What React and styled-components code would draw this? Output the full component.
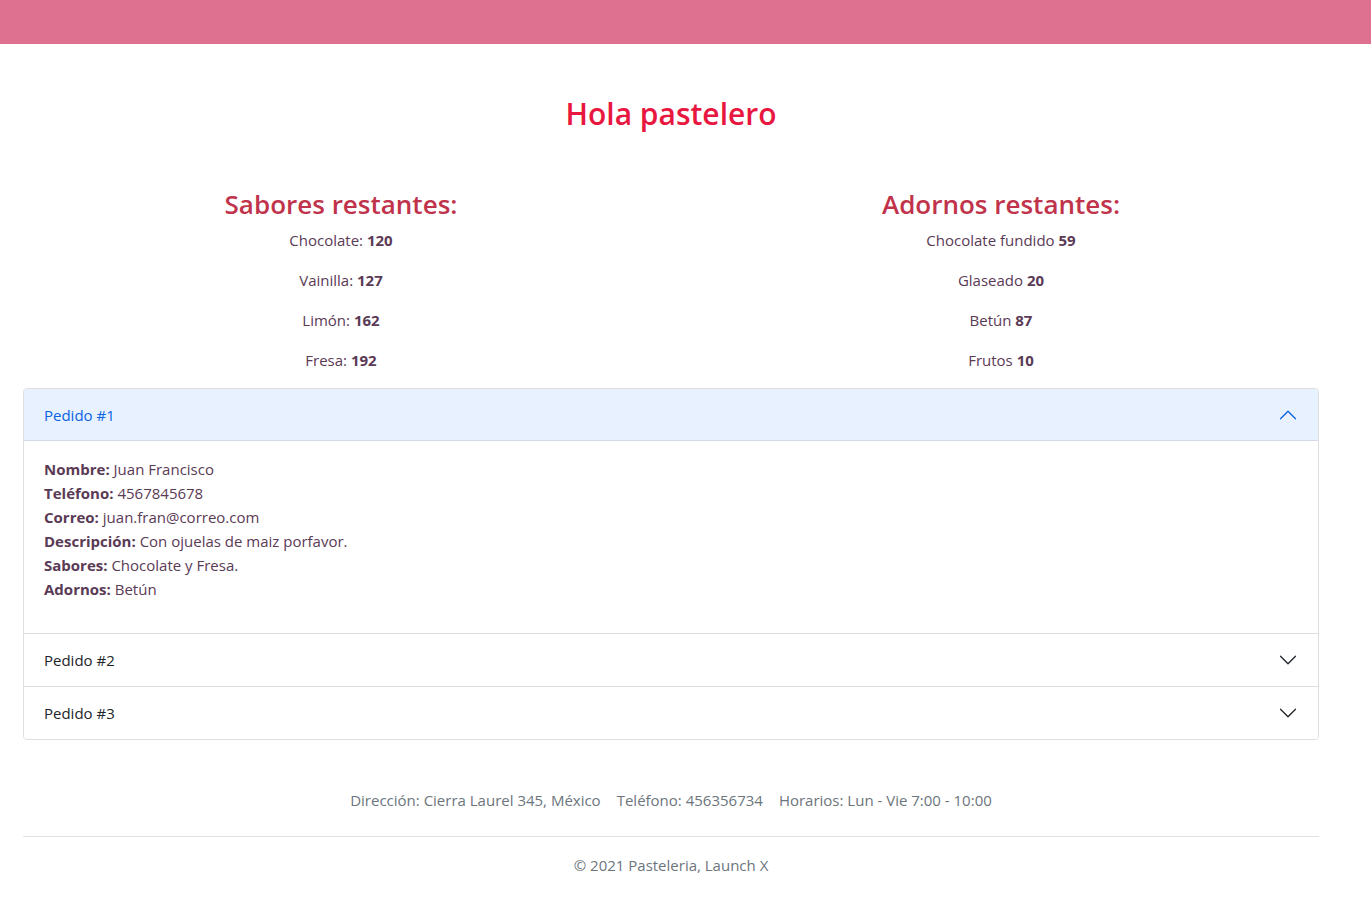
import React, { useState } from 'react'
import styled, { createGlobalStyle } from 'styled-components'

const GlobalStyle = createGlobalStyle`
  * { box-sizing: border-box; }
  body {
    margin: 0;
    background: #fff;
    font-family: "Open Sans", "Noto Sans", sans-serif;
    font-size: 15px;
    line-height: 24px;
    color: #5a3a55;
  }
`

const TopBar = styled.nav`
  height: 44px;
  width: 100%;
  background: #de7090;
`

const Container = styled.main`
  width: 1296px;
  margin-left: 23px;
`

const Title = styled.h2`
  margin: 51px 0 0;
  height: 38px;
  line-height: 38px;
  text-align: center;
  font-size: 30px;
  font-weight: 600;
  color: #e8173f;
`

const StockRow = styled.section`
  display: grid;
  grid-template-columns: 1fr 1fr;
  margin: 54px -12px 0;
`

const StockCol = styled.div`
  text-align: center;
`

const StockTitle = styled.h3`
  margin: 0 0 7px;
  height: 34px;
  line-height: 34px;
  font-size: 26px;
  font-weight: 600;
  color: #c0334b;
`

const StockItem = styled.p`
  margin: 0 0 16px;
  b { font-weight: 700; }
`

const Accordion = styled.div`
  border: 1px solid #dfdfdf;
  border-radius: 4px;
  overflow: hidden;
`

const Item = styled.div`
  & + & { border-top: 1px solid #dfdfdf; }
`

const Header = styled.button`
  display: flex;
  align-items: center;
  justify-content: space-between;
  width: 100%;
  height: 52px;
  padding: 0 20px;
  border: 0;
  font: inherit;
  text-align: left;
  cursor: pointer;
  background: ${({ open }) => (open ? '#e7f1ff' : '#fff')};
  color: ${({ open }) => (open ? '#0c63e4' : '#212529')};
  box-shadow: ${({ open }) => (open ? 'inset 0 -1px 0 #d4dbe6' : 'none')};
  svg {
    transform: ${({ open }) => (open ? 'rotate(-180deg)' : 'none')};
  }
`

const Body = styled.div`
  padding: 16px 20px;
  p { margin: 0 0 16px; }
  b { font-weight: 700; }
`

const Footer = styled.footer`
  margin: 24px 0;
  padding: 16px 0;
`

const FooterNav = styled.ul`
  display: flex;
  justify-content: center;
  list-style: none;
  margin: 0 0 16px;
  padding: 0 0 16px;
  border-bottom: 1px solid #dee2e6;
`

const FooterLink = styled.li`
  padding: 8px 8px;
  color: #6c757d;
`

const Copy = styled.p`
  margin: 0;
  text-align: center;
  color: #6c757d;
`

function Chevron() {
  return (
    <svg width="20" height="20" viewBox="0 0 16 16" fill="currentColor">
      <path fillRule="evenodd" d="M1.646 4.646a.5.5 0 0 1 .708 0L8 10.293l5.646-5.647a.5.5 0 0 1 .708.708l-6 6a.5.5 0 0 1-.708 0l-6-6a.5.5 0 0 1 0-.708z" />
    </svg>
  )
}

const sabores = [['Chocolate:', 120], ['Vainilla:', 127], ['Limón:', 162], ['Fresa:', 192]]
const adornos = [['Chocolate fundido', 59], ['Glaseado', 20], ['Betún', 87], ['Frutos', 10]]

const pedidos = [
  {
    id: 1,
    nombre: 'Juan Francisco',
    telefono: '4567845678',
    correo: 'juan.fran@correo.com',
    descripcion: 'Con ojuelas de maiz porfavor.',
    sabores: 'Chocolate y Fresa.',
    adornos: 'Betún',
  },
  { id: 2 },
  { id: 3 },
]

export default function App() {
  const [open, setOpen] = useState(1)
  return (
    <>
      <GlobalStyle />
      <TopBar />
      <Container>
        <Title>Hola pastelero</Title>
        <StockRow>
          <StockCol>
            <StockTitle>Sabores restantes:</StockTitle>
            {sabores.map(([n, v]) => (
              <StockItem key={n}>{n} <b>{v}</b></StockItem>
            ))}
          </StockCol>
          <StockCol>
            <StockTitle>Adornos restantes:</StockTitle>
            {adornos.map(([n, v]) => (
              <StockItem key={n}>{n} <b>{v}</b></StockItem>
            ))}
          </StockCol>
        </StockRow>
        <Accordion>
          {pedidos.map((p) => (
            <Item key={p.id}>
              <Header open={open === p.id} onClick={() => setOpen(open === p.id ? 0 : p.id)}>
                Pedido #{p.id}
                <Chevron />
              </Header>
              {open === p.id && p.nombre && (
                <Body>
                  <p>
                    <b>Nombre:</b> {p.nombre}<br />
                    <b>Teléfono:</b> {p.telefono}<br />
                    <b>Correo:</b> {p.correo}<br />
                    <b>Descripción:</b> {p.descripcion}<br />
                    <b>Sabores:</b> {p.sabores}<br />
                    <b>Adornos:</b> {p.adornos}
                  </p>
                </Body>
              )}
            </Item>
          ))}
        </Accordion>
        <Footer>
          <FooterNav>
            <FooterLink>Dirección: Cierra Laurel 345, México</FooterLink>
            <FooterLink>Teléfono: 456356734</FooterLink>
            <FooterLink>Horarios: Lun - Vie 7:00 - 10:00</FooterLink>
          </FooterNav>
          <Copy>© 2021 Pasteleria, Launch X</Copy>
        </Footer>
      </Container>
    </>
  )
}
